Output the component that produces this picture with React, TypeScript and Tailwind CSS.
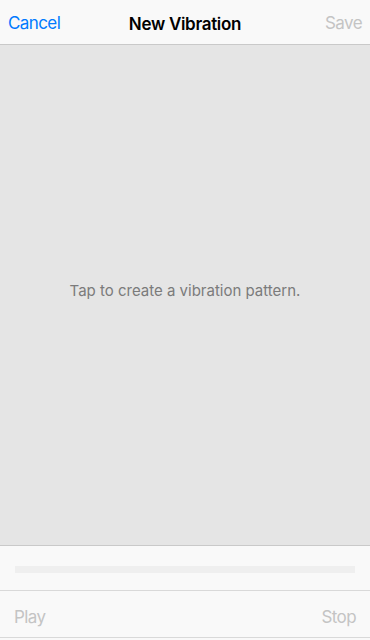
export default function App() {
  return (
    <div
      className="h-[640px] w-[370px] flex flex-col bg-[#f9f9f9] text-[17px]"
      style={{ fontFamily: "Inter, 'Liberation Sans', sans-serif" }}
    >
      {/* Nav bar */}
      <div className="h-[45px] shrink-0 flex items-center justify-between px-2 pt-[3px] border-b border-[#c9c9c9] relative tracking-[-0.6px]">
        <button className="text-[#007aff]">Cancel</button>
        <div className="absolute inset-x-0 pt-[3px] text-center font-semibold text-black pointer-events-none tracking-[-0.3px]">
          New Vibration
        </div>
        <button className="text-[#c4c4c4]">Save</button>
      </div>

      {/* Recording area */}
      <div className="h-[501px] shrink-0 flex items-center justify-center pb-[7px] bg-[#e5e5e5] border-b border-[#c9c9c9]">
        <p className="text-[15px] text-[#7b7b7b]">Tap to create a vibration pattern.</p>
      </div>

      {/* Progress */}
      <div className="h-[45px] shrink-0 flex items-center px-[15px] pt-[2px] border-b border-[#d9d9d9]">
        <div className="h-[7px] w-full bg-[#efefef]" />
      </div>

      {/* Toolbar */}
      <div className="h-[47px] shrink-0 flex items-center justify-between px-[14px] pt-[8px] border-b border-[#d9d9d9] text-[#c4c4c4] tracking-[-0.6px]">
        <button>Play</button>
        <button>Stop</button>
      </div>
    </div>
  );
}
